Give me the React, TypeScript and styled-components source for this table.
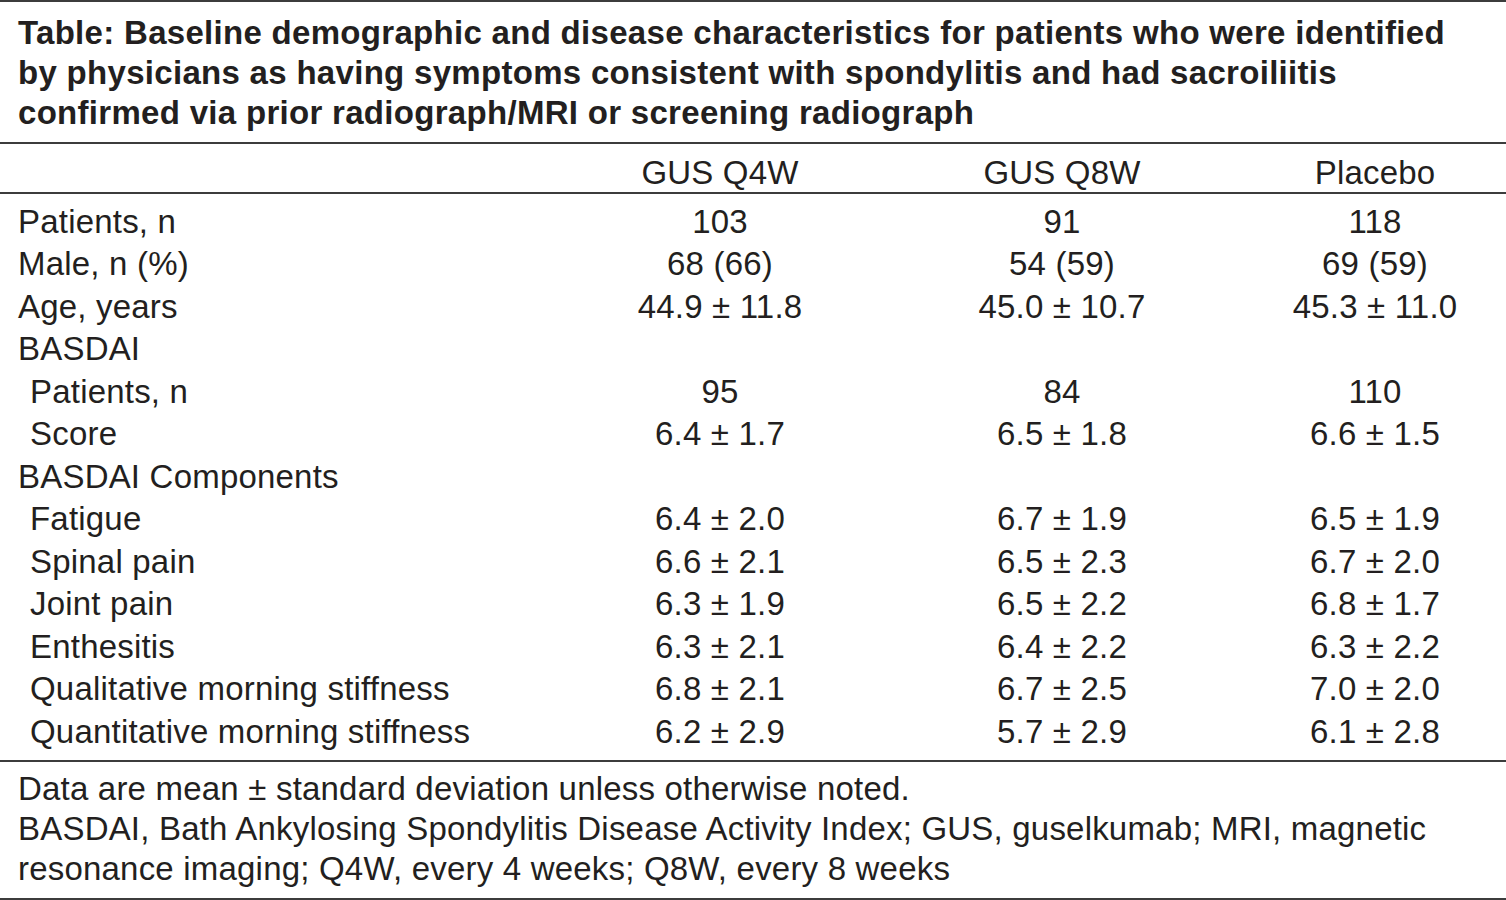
import React from 'react';
import styled, { createGlobalStyle } from 'styled-components';

const GlobalStyle = createGlobalStyle`
  html, body {
    margin: 0;
    padding: 0;
    background: #ffffff;
  }
  body {
    font-family: "Liberation Sans", Arial, sans-serif;
    color: #231f20;
  }
`;

const Page = styled.div`
  width: 1506px;
  height: 900px;
  overflow: hidden;
  background: #fff;
`;

const Title = styled.h1`
  margin: 0;
  padding: 11px 18px 9px 18px;
  border-top: 2px solid #3c3c3c;
  border-bottom: 2px solid #3c3c3c;
  font-size: 33px;
  letter-spacing: 0.3px;
  line-height: 40px;
  font-weight: bold;
  white-space: nowrap;
  color: #231f20;
`;

const Row = styled.div<{ $head?: boolean }>`
  display: grid;
  grid-template-columns: 560px 320px 364px 262px;
  align-items: center;
  box-sizing: border-box;
  height: ${p => (p.$head ? '48px' : '42.5px')};
  padding-top: ${p => (p.$head ? '9px' : '0')};
  font-size: 33px;
  letter-spacing: 0.2px;
  line-height: 1;
`;

const Label = styled.div<{ $indent?: boolean }>`
  padding-left: ${p => (p.$indent ? '30px' : '18px')};
  white-space: nowrap;
`;

const Cell = styled.div`
  text-align: center;
  white-space: nowrap;
`;

const Head = styled.div`
  border-bottom: 2px solid #3c3c3c;
  margin-bottom: -1px;
`;

const Body = styled.div`
  padding: 7px 0 7.5px;
  border-bottom: 2px solid #3c3c3c;
`;

const Notes = styled.div`
  padding: 7px 18px 9px;
  border-bottom: 2px solid #3c3c3c;
  font-size: 33px;
  letter-spacing: 0.2px;
  line-height: 40px;
  white-space: nowrap;
`;

type Line = { label: string; indent?: boolean; values?: [string, string, string] };

const rows: Line[] = [
  { label: 'Patients, n', values: ['103', '91', '118'] },
  { label: 'Male, n (%)', values: ['68 (66)', '54 (59)', '69 (59)'] },
  { label: 'Age, years', values: ['44.9 ± 11.8', '45.0 ± 10.7', '45.3 ± 11.0'] },
  { label: 'BASDAI' },
  { label: 'Patients, n', indent: true, values: ['95', '84', '110'] },
  { label: 'Score', indent: true, values: ['6.4 ± 1.7', '6.5 ± 1.8', '6.6 ± 1.5'] },
  { label: 'BASDAI Components' },
  { label: 'Fatigue', indent: true, values: ['6.4 ± 2.0', '6.7 ± 1.9', '6.5 ± 1.9'] },
  { label: 'Spinal pain', indent: true, values: ['6.6 ± 2.1', '6.5 ± 2.3', '6.7 ± 2.0'] },
  { label: 'Joint pain', indent: true, values: ['6.3 ± 1.9', '6.5 ± 2.2', '6.8 ± 1.7'] },
  { label: 'Enthesitis', indent: true, values: ['6.3 ± 2.1', '6.4 ± 2.2', '6.3 ± 2.2'] },
  { label: 'Qualitative morning stiffness', indent: true, values: ['6.8 ± 2.1', '6.7 ± 2.5', '7.0 ± 2.0'] },
  { label: 'Quantitative morning stiffness', indent: true, values: ['6.2 ± 2.9', '5.7 ± 2.9', '6.1 ± 2.8'] },
];

export default function App() {
  return (
    <Page>
      <GlobalStyle />
      <Title>
        Table: Baseline demographic and disease characteristics for patients who were identified
        <br />
        by physicians as having symptoms consistent with spondylitis and had sacroiliitis
        <br />
        confirmed via prior radiograph/MRI or screening radiograph
      </Title>
      <Head>
        <Row $head>
          <Label />
          <Cell>GUS Q4W</Cell>
          <Cell>GUS Q8W</Cell>
          <Cell>Placebo</Cell>
        </Row>
      </Head>
      <Body>
        {rows.map((r, i) => (
          <Row key={i}>
            <Label $indent={r.indent}>{r.label}</Label>
            <Cell>{r.values?.[0]}</Cell>
            <Cell>{r.values?.[1]}</Cell>
            <Cell>{r.values?.[2]}</Cell>
          </Row>
        ))}
      </Body>
      <Notes>
        Data are mean ± standard deviation unless otherwise noted.
        <br />
        BASDAI, Bath Ankylosing Spondylitis Disease Activity Index; GUS, guselkumab; MRI, magnetic
        <br />
        resonance imaging; Q4W, every 4 weeks; Q8W, every 8 weeks
      </Notes>
    </Page>
  );
}
